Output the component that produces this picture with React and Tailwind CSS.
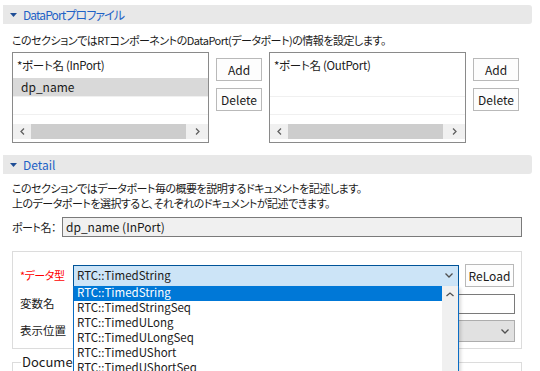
import React from 'react';

const font = "font-['Noto_Sans_CJK_JP',sans-serif] [font-feature-settings:'palt']";

const SectionHeader = ({ title, tight }) => (
  <div className="ml-[3px] mr-[8px] h-[19px] flex items-center bg-[#e8e8e8] rounded-r-[3px]">
    <svg width="7" height="4" viewBox="0 0 7 4" className="ml-[7px]">
      <path d="M0 0h7L3.5 4z" fill="#1f4e96" />
    </svg>
    <span className={`ml-[6px] text-[12px] leading-[19px] text-[#1e62c6] ${tight ? 'tracking-[-0.9px]' : ''}`}>{title}</span>
  </div>
);

const Chevron = ({ dir, color = '#606060' }) => {
  const d = {
    left: 'M4 0.5L1 3.5L4 6.5',
    right: 'M1 0.5L4 3.5L1 6.5',
    up: 'M0.5 4L4 1L7.5 4',
    down: 'M0.5 0.5L4 4L7.5 0.5',
  }[dir];
  const vertical = dir === 'up' || dir === 'down';
  return (
    <svg width={vertical ? 8 : 5} height={vertical ? 5 : 7} viewBox={vertical ? '0 0 8 5' : '0 0 5 7'}>
      <path d={d} fill="none" stroke={color} strokeWidth="1.3" />
    </svg>
  );
};

const Button = ({ children, w = 'w-[46px]' }) => (
  <div className={`${w} h-[23px] border border-[#b9b9b9] bg-[#fdfdfd] flex items-center justify-center text-[12px] text-[#1a1a1a]`}>
    {children}
  </div>
);

const PortList = ({ header, selected }) => (
  <div className="w-[197px] h-[91px] border border-[#8a8a8a] flex flex-col bg-white">
    <div className="h-[25px] pl-[4px] flex items-center text-[11.5px] tracking-[-0.3px] text-[#1a1a1a]">{header}</div>
    <div className={`h-[19px] pl-[8px] flex items-center text-[12px] text-[#1a1a1a] border-b border-[#f0f0f0] ${selected ? 'bg-[#d9d9d9]' : ''}`}>
      {selected}
    </div>
    <div className="h-[18px] border-b border-[#f0f0f0]" />
    <div className="mt-[9px] h-[15px] flex items-stretch bg-[#f0f0f0]">
      <div className="w-[18px] flex items-center justify-center">
        <Chevron dir="left" />
      </div>
      <div className="w-[155px] bg-[#cdcdcd]" />
      <div className="flex-1 flex items-center justify-center">
        <Chevron dir="right" />
      </div>
    </div>
  </div>
);

const ListBlock = ({ header, selected }) => (
  <div className="flex gap-[7px]">
    <PortList header={header} selected={selected} />
    <div className="pt-[6px] flex flex-col gap-[7px]">
      <Button>Add</Button>
      <Button>Delete</Button>
    </div>
  </div>
);

const types = [
  'RTC::TimedString',
  'RTC::TimedStringSeq',
  'RTC::TimedULong',
  'RTC::TimedULongSeq',
  'RTC::TimedUShort',
  'RTC::TimedUShortSeq',
];

const Dropdown = () => (
  <div className="absolute -left-px top-full w-[386px] h-[90px] border-x border-[#0a6cc4] bg-white flex overflow-hidden shadow-[2px_2px_3px_rgba(0,0,0,0.15)] z-10">
    <div className="flex-1 flex flex-col">
      {types.map((t, i) => (
        <div
          key={t}
          className={`h-[15px] shrink-0 pl-[3px] flex items-center text-[11.5px] ${i === 0 ? 'bg-[#0078d7] text-white' : 'text-[#1a1a1a]'}`}
        >
          {t}
        </div>
      ))}
    </div>
    <div className="w-[16px] bg-[#f0f0f0] flex justify-center pt-[6px]">
      <Chevron dir="up" color="#505050" />
    </div>
  </div>
);

export default function App() {
  return (
    <div className={`${font} w-[540px] h-[371px] overflow-hidden bg-white text-[#1a1a1a] pt-[5px]`}>
      <SectionHeader title="DataPortプロファイル" tight />
      <div className="pl-[12px]">
        <p className="mt-[9px] h-[14px] text-[11px] leading-[14px] tracking-[-0.5px] whitespace-nowrap">
          このセクションではRTコンポーネントのDataPort(データポート)の情報を設定します。
        </p>
        <div className="mt-[5px] flex gap-[7px]">
          <ListBlock header="*ポート名 (InPort)" selected="dp_name" />
          <ListBlock header="*ポート名 (OutPort)" />
        </div>
      </div>

      <div className="mt-[12px]">
        <SectionHeader title="Detail" />
      </div>
      <div className="pl-[12px]">
        <div className="mt-[7px] flex flex-col text-[11px] leading-[15px] tracking-[-0.5px] whitespace-nowrap">
          <p>このセクションではデータポート毎の概要を説明するドキュメントを記述します。</p>
          <p>上のデータポートを選択すると、それぞれのドキュメントが記述できます。</p>
        </div>
        <div className="mt-[6px] flex items-center">
          <span className="w-[50px] shrink-0 whitespace-nowrap text-[11px] tracking-[-0.5px]">ポート名：</span>
          <div className="w-[460px] shrink-0 h-[20px] border border-[#7a7a7a] bg-[#f0f0f0] pl-[3px] flex items-center text-[12px]">
            dp_name (InPort)
          </div>
        </div>

        <div className="mt-[14px] w-[510px] border border-[#dcdcdc] pl-[7px] pr-[6px] pt-[12px] pb-[6px] flex flex-col gap-[6px]">
          <div className="flex items-center">
            <span className="w-[53px] shrink-0 whitespace-nowrap text-[11px] tracking-[-0.5px] text-[#ff0000]">*データ型</span>
            <div className="relative w-[386px] shrink-0 h-[22px] border border-[#005499] bg-[#cce4f7] flex items-center justify-between pl-[3px] pr-[5px] text-[11.5px]">
              <span>RTC::TimedString</span>
              <Chevron dir="down" color="#505050" />
              <Dropdown />
            </div>
            <div className="ml-[6px]">
              <Button w="w-[49px]">ReLoad</Button>
            </div>
          </div>
          <div className="flex items-center mt-[1px]">
            <span className="w-[53px] shrink-0 whitespace-nowrap text-[11.5px]">変数名</span>
            <div className="w-[442px] shrink-0 h-[20px] border border-[#7a7a7a] bg-white" />
          </div>
          <div className="flex items-center">
            <span className="w-[53px] shrink-0 whitespace-nowrap text-[11.5px]">表示位置</span>
            <div className="w-[442px] shrink-0 h-[22px] border border-[#adadad] bg-[#e1e1e1] flex items-center justify-end pr-[5px]">
              <Chevron dir="down" color="#505050" />
            </div>
          </div>
        </div>

        <div className="relative mt-[13px] w-[510px] h-[40px] border border-[#dcdcdc]">
          <span className="absolute left-[8px] -top-[9px] bg-white px-[1px] text-[13px] leading-[16px]">Document</span>
        </div>
      </div>
    </div>
  );
}
